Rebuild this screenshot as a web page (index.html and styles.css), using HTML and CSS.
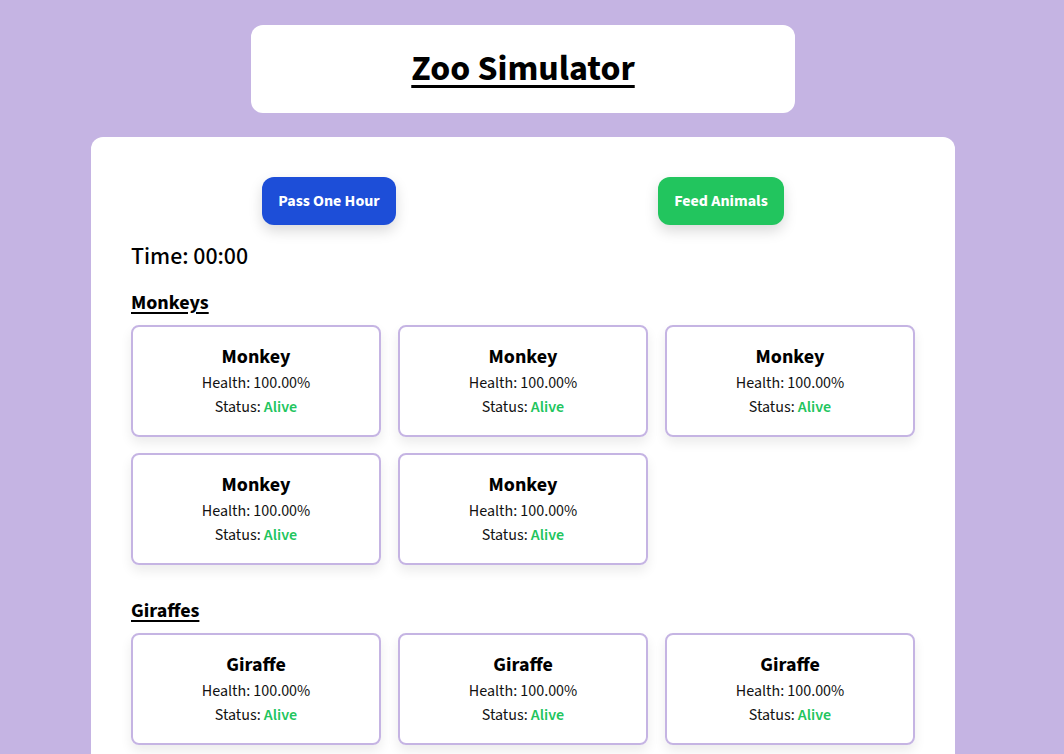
FILE: index.html
```html
<!DOCTYPE html>
<html lang="en">
<head>
<meta charset="utf-8">
<title>Zoo Simulator</title>
<link rel="stylesheet" href="styles.css">
</head>
<body>
<div class="page">
  <header class="header-card">
    <h1 class="title">Zoo Simulator</h1>
  </header>
  <main class="main-card">
    <div class="actions">
      <button class="btn btn-blue">Pass One Hour</button>
      <button class="btn btn-green">Feed Animals</button>
    </div>
    <p class="time">Time: 00:00</p>

    <section class="group">
      <h2 class="group-title">Monkeys</h2>
      <div class="grid">
        <div class="animal"><h3>Monkey</h3><p>Health: 100.00%</p><p>Status: <span class="alive">Alive</span></p></div>
        <div class="animal"><h3>Monkey</h3><p>Health: 100.00%</p><p>Status: <span class="alive">Alive</span></p></div>
        <div class="animal"><h3>Monkey</h3><p>Health: 100.00%</p><p>Status: <span class="alive">Alive</span></p></div>
        <div class="animal"><h3>Monkey</h3><p>Health: 100.00%</p><p>Status: <span class="alive">Alive</span></p></div>
        <div class="animal"><h3>Monkey</h3><p>Health: 100.00%</p><p>Status: <span class="alive">Alive</span></p></div>
      </div>
    </section>

    <section class="group">
      <h2 class="group-title">Giraffes</h2>
      <div class="grid">
        <div class="animal"><h3>Giraffe</h3><p>Health: 100.00%</p><p>Status: <span class="alive">Alive</span></p></div>
        <div class="animal"><h3>Giraffe</h3><p>Health: 100.00%</p><p>Status: <span class="alive">Alive</span></p></div>
        <div class="animal"><h3>Giraffe</h3><p>Health: 100.00%</p><p>Status: <span class="alive">Alive</span></p></div>
        <div class="animal"><h3>Giraffe</h3><p>Health: 100.00%</p><p>Status: <span class="alive">Alive</span></p></div>
        <div class="animal"><h3>Giraffe</h3><p>Health: 100.00%</p><p>Status: <span class="alive">Alive</span></p></div>
      </div>
    </section>

    <section class="group">
      <h2 class="group-title">Elephants</h2>
      <div class="grid">
        <div class="animal"><h3>Elephant</h3><p>Health: 100.00%</p><p>Status: <span class="alive">Alive</span></p></div>
        <div class="animal"><h3>Elephant</h3><p>Health: 100.00%</p><p>Status: <span class="alive">Alive</span></p></div>
        <div class="animal"><h3>Elephant</h3><p>Health: 100.00%</p><p>Status: <span class="alive">Alive</span></p></div>
        <div class="animal"><h3>Elephant</h3><p>Health: 100.00%</p><p>Status: <span class="alive">Alive</span></p></div>
        <div class="animal"><h3>Elephant</h3><p>Health: 100.00%</p><p>Status: <span class="alive">Alive</span></p></div>
      </div>
    </section>
  </main>
</div>
</body>
</html>
```

FILE: styles.css
```css
* { box-sizing: border-box; }
html, body { margin: 0; padding: 0; }
body {
  background: #c5b4e3;
  font-family: "Source Sans Pro", "Source Sans 3", Lato, "Liberation Sans", sans-serif;
  color: #000;
}
.page {
  display: flex;
  flex-direction: column;
  align-items: center;
  padding: 25px 18px 40px 0;
  gap: 24px;
}
.header-card {
  background: #fff;
  width: 544px;
  border-radius: 12px;
  padding: 24px 0;
  text-align: center;
}
.title {
  margin: 0;
  font-size: 36px;
  line-height: 40px;
  font-weight: 700;
  text-decoration: underline;
  text-decoration-thickness: 3px;
  text-underline-offset: 5px;
  color: #000;
}
.main-card {
  background: #fff;
  width: 864px;
  border-radius: 12px;
  padding: 40px;
}
.actions {
  display: flex;
  justify-content: space-around;
  margin-bottom: 16px;
}
.btn {
  border: 0;
  border-radius: 12px;
  padding: 0 16px;
  height: 48px;
  color: #fff;
  font-family: inherit;
  font-weight: 700;
  font-size: 16px;
  box-shadow: 0 6px 14px rgba(0,0,0,0.15);
  cursor: pointer;
}
.btn-blue { background: #1d4ed8; }
.btn-green { background: #22c55e; }
.time {
  margin: 0 0 16px;
  font-size: 24px;
  line-height: 32px;
  font-weight: 500;
}
.group + .group { margin-top: 32px; }
.group-title {
  margin: 0 0 8px;
  font-size: 20px;
  line-height: 28px;
  font-weight: 700;
  text-decoration: underline;
  text-decoration-thickness: 2px;
  text-underline-offset: 3px;
}
.grid {
  display: grid;
  grid-template-columns: repeat(3, 1fr);
  gap: 16px 17px;
}
.animal {
  border: 2px solid #c5b4e3;
  border-radius: 8px;
  padding: 16px;
  text-align: center;
  box-shadow: 0 6px 12px rgba(0,0,0,0.08);
}
.animal h3 {
  margin: 0;
  font-size: 20px;
  line-height: 28px;
  font-weight: 700;
}
.animal p {
  margin: 0;
  font-size: 16px;
  line-height: 24px;
  color: #111;
}
.alive {
  color: #22c55e;
  font-weight: 600;
}
```
